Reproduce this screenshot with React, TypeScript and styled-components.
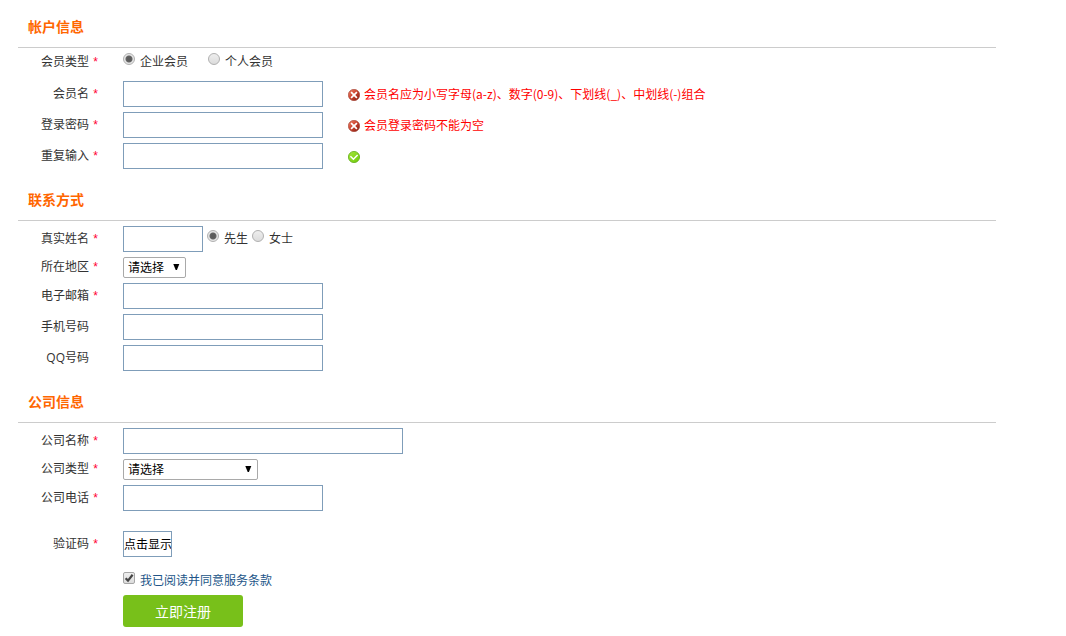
import React, { useId, useState } from "react";
import styled, { createGlobalStyle, css } from "styled-components";

const GlobalStyle = createGlobalStyle`
  *, *::before, *::after { box-sizing: border-box; }
  body {
    margin: 0;
    background: #fff;
    color: #333;
    font: 12px/16px "Open Sans", "Noto Sans CJK SC", sans-serif;
  }
  input, select, button { font: inherit; margin: 0; }
`;

const Form = styled.form`
  display: flex;
  flex-direction: column;
  gap: 11px;
  padding: 7px 70px 8px 18px;
`;

const Section = styled.section`
  display: flex;
  flex-direction: column;
  gap: 5px;
`;

const Heading = styled.h2`
  margin: 0;
  padding: 10px;
  border-bottom: 1px solid #ccc;
  color: #ff6600;
  font-size: 14px;
  line-height: 20px;
  font-weight: bold;
`;

const Row = styled.div<{ $top?: boolean; $spaced?: boolean }>`
  display: flex;
  align-items: ${(p) => (p.$top ? "flex-start" : "center")};
  gap: 25px;
  ${(p) => p.$top && css`min-height: 23px;`}
  ${(p) => p.$spaced && css`margin-top: 15px;`}
`;

const labelStyle = css`
  display: flex;
  justify-content: flex-end;
  flex: 0 0 80px;
`;

const FieldLabel = styled.label`
  ${labelStyle}
  padding-bottom: 1px;
`;

const GroupLabel = styled.span`
  ${labelStyle}
  padding-top: 1px;
`;

const Star = styled.span`
  width: 9px;
  color: #ff0033;
  font-family: "Liberation Sans", sans-serif;
  text-align: right;
`;

const Controls = styled.div<{ $gap?: number }>`
  display: flex;
  align-items: flex-start;
  gap: ${(p) => p.$gap ?? 4}px;
`;

const TextBox = styled.input<{ $width?: number }>`
  width: ${(p) => p.$width ?? 200}px;
  height: 26px;
  padding: 0 4px;
  border: 1px solid #7f9db9;
  border-radius: 0;
  background: #fff;
  color: #000;
`;

const CaptchaBox = styled(TextBox)`
  padding: 0;
`;

const Choice = styled.label`
  display: flex;
  align-items: flex-start;
  gap: 5px;
`;

const Radio = styled.input`
  appearance: none;
  width: 12px;
  height: 12px;
  border: 1px solid #b0b0b0;
  border-radius: 50%;
  background: linear-gradient(#eee, #dcdcdc);
  &:checked {
    background: radial-gradient(circle, #5c5c5c 0 2px, #666 3px, #e6e6e6 4px);
  }
`;

const RadioSet = styled.div<{ $gap: number; $inset?: boolean }>`
  display: flex;
  gap: ${(p) => p.$gap}px;
  ${(p) => p.$inset && css`padding-top: 4px;`}
`;

const SelectFrame = styled.div<{ $width: number }>`
  display: grid;
  align-items: center;
  width: ${(p) => p.$width}px;
  height: 21px;
  > * { grid-area: 1 / 1; }
  svg {
    justify-self: end;
    margin-right: 6px;
    pointer-events: none;
  }
`;

const Select = styled.select`
  appearance: none;
  width: 100%;
  height: 21px;
  padding: 0 4px;
  border: 1px solid #a9a9a9;
  border-radius: 2px;
  background: #fff;
  color: #000;
`;

const Tip = styled.div`
  display: flex;
  align-items: center;
  gap: 4px;
  color: #ff0000;
  font-family: "Noto Sans CJK SC", sans-serif;
  svg { flex: none; margin-top: 2px; }
`;

const TipText = styled.span`
  padding-bottom: 1px;
`;

const Footer = styled.div`
  display: flex;
  flex-direction: column;
  align-items: flex-start;
  padding: 4px 0 0 105px;
  gap: 6px;
`;

const CheckFrame = styled.span`
  display: grid;
  > * { grid-area: 1 / 1; }
  svg { pointer-events: none; visibility: hidden; }
  input:checked + svg { visibility: visible; }
`;

const Check = styled.input`
  appearance: none;
  width: 12px;
  height: 12px;
  border: 1px solid #a6a6a6;
  border-radius: 2px;
  background: linear-gradient(#eee, #dcdcdc);
`;

const ChoiceText = styled.span`
  padding-top: 1px;
`;

const Terms = styled.a`
  padding-top: 1px;
  color: #225588;
  text-decoration: none;
`;

const Submit = styled.button`
  width: 120px;
  height: 32px;
  padding: 1px 0 0;
  border: 0;
  border-radius: 3px;
  background: #78c01a;
  color: #fff;
  font-size: 14px;
  line-height: 20px;
  cursor: pointer;
`;

const ErrorIcon = () => (
  <svg width="12" height="12" viewBox="0 0 12 12" aria-hidden="true">
    <defs>
      <linearGradient id="err" x1="0" y1="0" x2="1" y2="1">
        <stop offset="0" stopColor="#f08a70" />
        <stop offset="0.45" stopColor="#cf4630" />
        <stop offset="1" stopColor="#7e1a10" />
      </linearGradient>
    </defs>
    <circle cx="6" cy="6" r="5.7" fill="url(#err)" stroke="#a04030" strokeWidth="0.6" />
    <path d="M3.1 3.1 8.9 8.9M8.9 3.1 3.1 8.9" stroke="#fff" strokeWidth="1.7" />
  </svg>
);

const OkIcon = () => (
  <svg width="12" height="12" viewBox="0 0 12 12" aria-label="通过" role="img">
    <defs>
      <linearGradient id="ok" x1="0" y1="0" x2="1" y2="1">
        <stop offset="0" stopColor="#a8e63c" />
        <stop offset="1" stopColor="#6ccb08" />
      </linearGradient>
    </defs>
    <circle cx="6" cy="6" r="5.6" fill="url(#ok)" stroke="#62ac18" strokeWidth="0.8" />
    <path d="M2.4 5.2 5.4 8.2 9.6 4" fill="none" stroke="#fff" strokeWidth="1.5" />
  </svg>
);

type FieldProps = {
  label: string;
  required?: boolean;
  spaced?: boolean;
  children: (id: string) => React.ReactNode;
  tip?: React.ReactNode;
};

function Field({ label, required, spaced, children, tip }: FieldProps) {
  const id = useId();
  return (
    <Row $spaced={spaced}>
      <FieldLabel htmlFor={id}>
        {label}
        <Star>{required ? "*" : ""}</Star>
      </FieldLabel>
      <Controls>{children(id)}</Controls>
      {tip}
    </Row>
  );
}

function Radios({ name, options, gap, inset, ...rest }: {
  name: string; options: string[]; gap: number; inset?: boolean;
  "aria-label"?: string; "aria-labelledby"?: string;
}) {
  return (
    <RadioSet role="radiogroup" $gap={gap} $inset={inset} {...rest}>
      {options.map((option, i) => (
        <Choice key={option}>
          <Radio type="radio" name={name} value={option} defaultChecked={i === 0} />
          <ChoiceText>{option}</ChoiceText>
        </Choice>
      ))}
    </RadioSet>
  );
}

function DropDown({ id, width }: { id: string; width: number }) {
  return (
    <SelectFrame $width={width}>
      <Select id={id}>
        <option>请选择</option>
      </Select>
      <svg width="7" height="7" viewBox="0 0 7 7" aria-hidden="true">
        <path d="M0.3 0h6L3.9 6h-1.2z" fill="#000" />
      </svg>
    </SelectFrame>
  );
}

const ErrorTip = ({ text }: { text: string }) => (
  <Tip role="alert">
    <ErrorIcon />
    <TipText>{text}</TipText>
  </Tip>
);

export default function App() {
  const [captcha, setCaptcha] = useState("点击显示");
  return (
    <>
      <GlobalStyle />
      <Form onSubmit={(e) => e.preventDefault()}>
        <Section>
          <Heading>帐户信息</Heading>
          <Row $top>
            <GroupLabel id="member-type">
              会员类型<Star>*</Star>
            </GroupLabel>
            <Radios name="type" options={["企业会员", "个人会员"]} gap={20} aria-labelledby="member-type" />
          </Row>
          <Field label="会员名" required tip={<ErrorTip text="会员名应为小写字母(a-z)、数字(0-9)、下划线(_)、中划线(-)组合" />}>
            {(id) => <TextBox id={id} type="text" />}
          </Field>
          <Field label="登录密码" required tip={<ErrorTip text="会员登录密码不能为空" />}>
            {(id) => <TextBox id={id} type="password" />}
          </Field>
          <Field label="重复输入" required tip={<Tip><OkIcon /></Tip>}>
            {(id) => <TextBox id={id} type="password" />}
          </Field>
        </Section>

        <Section>
          <Heading>联系方式</Heading>
          <Field label="真实姓名" required>
            {(id) => (
              <>
                <TextBox id={id} type="text" $width={80} />
                <Radios name="gender" options={["先生", "女士"]} gap={4} inset aria-label="称谓" />
              </>
            )}
          </Field>
          <Field label="所在地区" required>{(id) => <DropDown id={id} width={63} />}</Field>
          <Field label="电子邮箱" required>{(id) => <TextBox id={id} type="email" />}</Field>
          <Field label="手机号码">{(id) => <TextBox id={id} type="tel" />}</Field>
          <Field label="QQ号码">{(id) => <TextBox id={id} type="text" />}</Field>
        </Section>

        <Section>
          <Heading>公司信息</Heading>
          <Field label="公司名称" required>{(id) => <TextBox id={id} type="text" $width={280} />}</Field>
          <Field label="公司类型" required>{(id) => <DropDown id={id} width={135} />}</Field>
          <Field label="公司电话" required>{(id) => <TextBox id={id} type="tel" />}</Field>
          <Field label="验证码" required spaced>
            {(id) => (
              <CaptchaBox
                id={id}
                type="text"
                $width={49}
                value={captcha}
                onChange={(e) => setCaptcha(e.target.value)}
              />
            )}
          </Field>
        </Section>

        <Footer>
          <Choice>
            <CheckFrame>
              <Check type="checkbox" defaultChecked />
              <svg width="12" height="12" viewBox="0 0 12 12" aria-hidden="true">
                <path d="M2.6 6.2 5 8.6 9.6 2.8" fill="none" stroke="#444" strokeWidth="2.2" />
              </svg>
            </CheckFrame>
            <Terms href="#terms">我已阅读并同意服务条款</Terms>
          </Choice>
          <Submit type="submit">立即注册</Submit>
        </Footer>
      </Form>
    </>
  );
}
